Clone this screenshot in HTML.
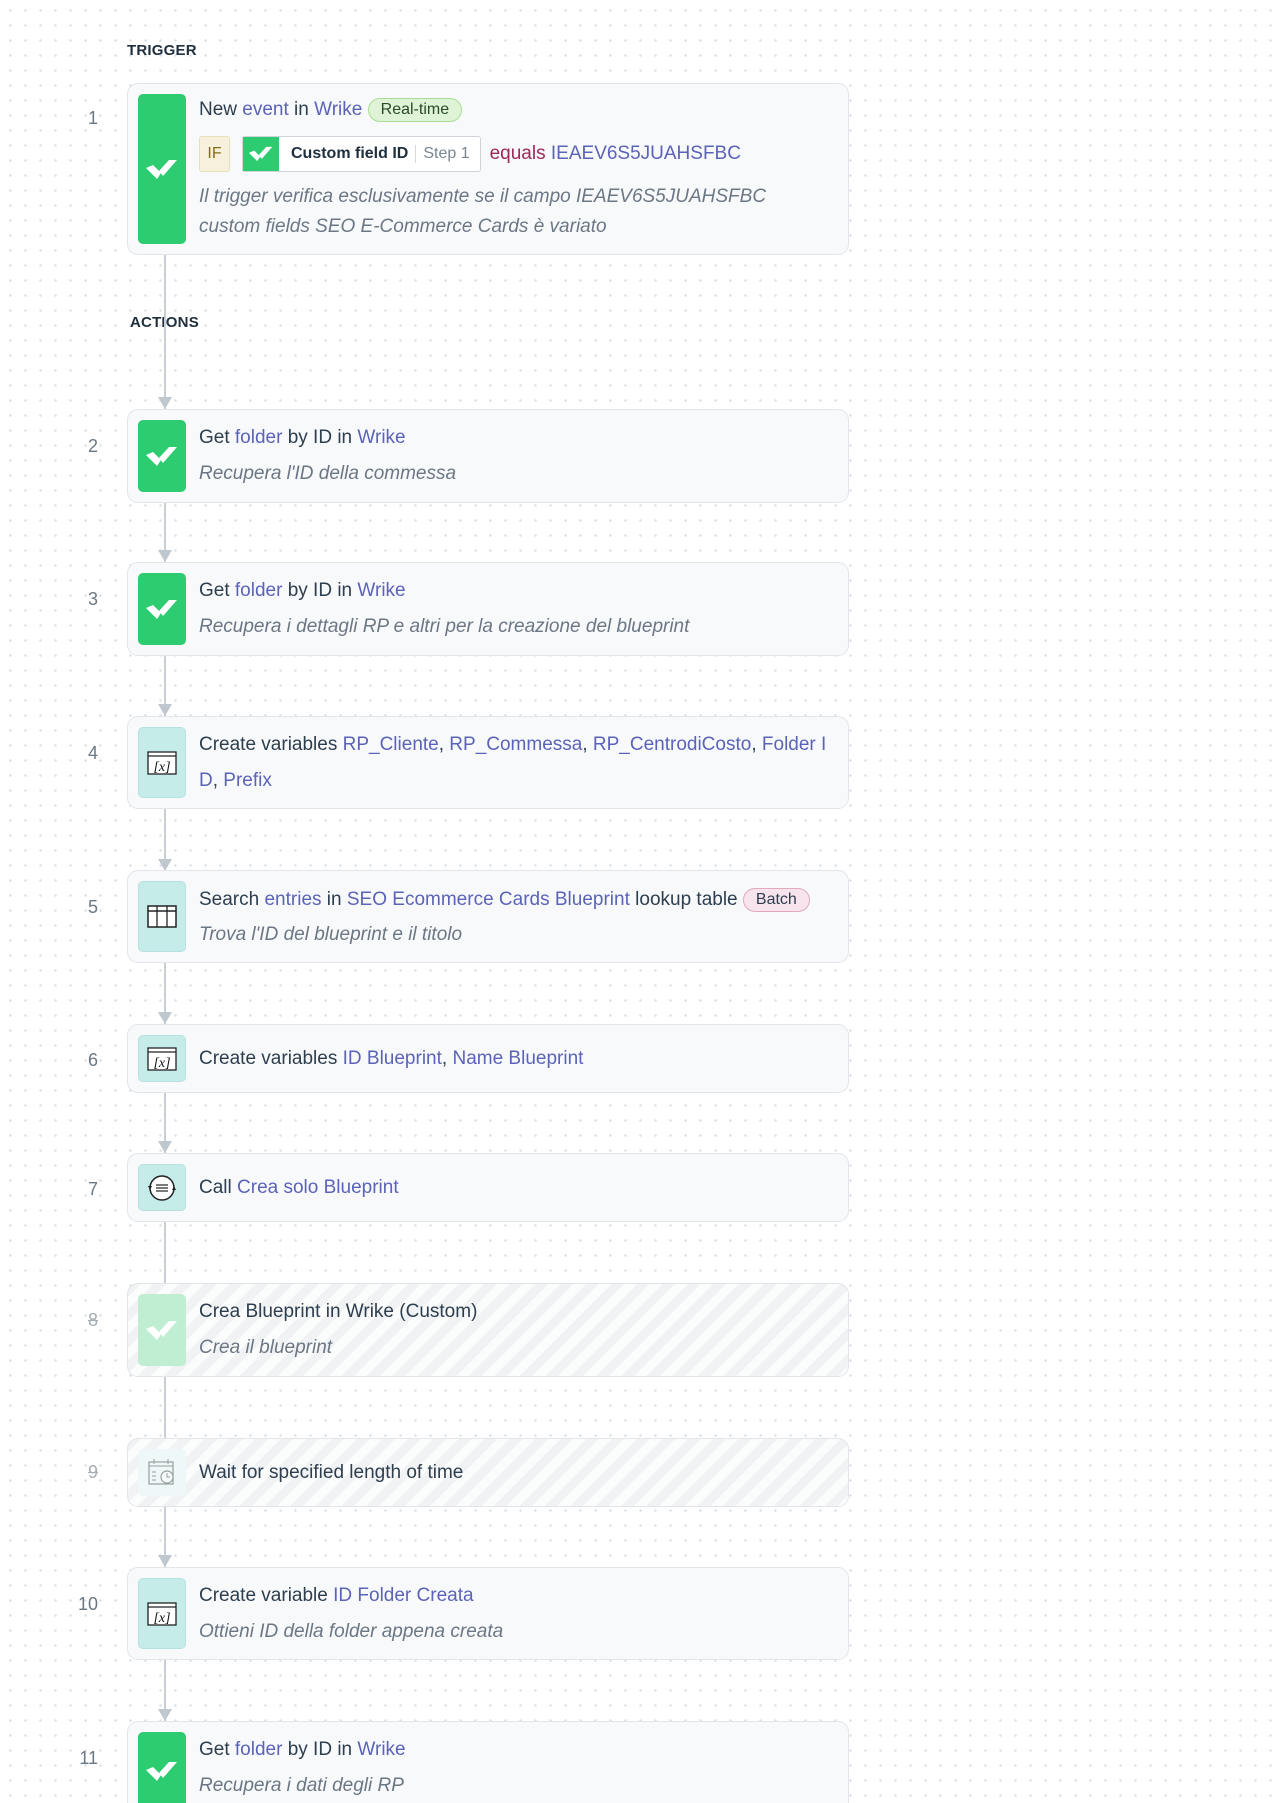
<!DOCTYPE html>
<html><head><meta charset="utf-8"><style>
*{box-sizing:border-box;margin:0;padding:0}
html,body{width:1273px;height:1803px;overflow:hidden}
body{background-color:#fff;background-image:radial-gradient(circle,#d9dee3 1.1px,transparent 1.4px);background-size:15px 15px;background-position:3px 3px;font-family:"Liberation Sans",sans-serif;color:#2d3e4e;position:relative}
.lbl{position:absolute;font-size:15px;font-weight:bold;color:#1f2f3d;letter-spacing:.2px}
.line{position:absolute;left:164px;width:2px;background:#c7ced6}
.arr{position:absolute;left:158px;width:0;height:0;border-left:7px solid transparent;border-right:7px solid transparent;border-top:12px solid #bfc7cf}
.card{position:absolute;left:127px;width:722px;background:#f8f9fb;border:1.5px solid #e2e6ea;border-radius:11px}
.dis{background:repeating-linear-gradient(135deg,#f0f2f4 0 9px,#fbfcfc 9px 18px)}
.ic{position:absolute;left:10px;top:10px;bottom:10px;width:48px;border-radius:5px;display:flex;align-items:center;justify-content:center}
.g{background:#2ecc71}.t{background:#c6ecea;border:1px solid #b7e1df}
.num{position:absolute;width:70px;text-align:right;left:28px;font-size:18px;color:#6b7884}
.tx{position:absolute;left:71px;font-size:19px;white-space:nowrap}
.l{color:#5b63b8}
.sub{font-style:italic;color:#6b7784}
.pill{display:inline-block;border-radius:14px;padding:2px 12px;font-size:16px;vertical-align:1px}
</style></head><body>
<svg width="0" height="0" style="position:absolute"><defs>
<g id="wr"><polygon points="0,9 7,6 15,14 11,20" fill="#fff"/><polygon points="13,12 23,1 31,1 17,17" fill="#fff"/></g>
<g id="vx"><rect x="1" y="1" width="28" height="22" fill="#fff" stroke="#222" stroke-width="1.3"/><line x1="1" y1="5" x2="29" y2="5" stroke="#222" stroke-width="1.3"/><text x="15" y="20" font-family="Liberation Serif" font-style="italic" font-size="14" text-anchor="middle" fill="#111">[x]</text></g>
</defs></svg>

<div class="lbl" style="left:127px;top:42px">TRIGGER</div>
<div class="lbl" style="left:130px;top:314px">ACTIONS</div>

<div class="line" style="top:255px;height:1540px"></div>
<div class="arr" style="top:397px"></div>
<div class="arr" style="top:550px"></div>
<div class="arr" style="top:704px"></div>
<div class="arr" style="top:859px"></div>
<div class="arr" style="top:1012px"></div>
<div class="arr" style="top:1141px"></div>
<div class="arr" style="top:1555px"></div>
<div class="arr" style="top:1709px"></div>

<div class="num" style="top:108px">1</div>
<div class="card" style="top:83px;height:172px">
 <div class="ic g"><svg width="32" height="21"><use href="#wr"/></svg></div>
 <div class="tx" style="top:14px">New <span class="l">event</span> in <span class="l">Wrike</span> <span class="pill" style="background:#dff3d6;border:1.5px solid #a8de94;color:#2b4a2a">Real-time</span></div>
 <div class="tx" style="top:52px;display:flex;align-items:center">
  <span style="display:inline-block;background:#f6f0dc;border:1px solid #e8dfb8;color:#8a6d1a;font-size:16px;border-radius:3px;width:31px;height:36px;line-height:34px;text-align:center">IF</span>
  <span style="display:inline-flex;align-items:center;margin-left:12px;border:1px solid #cfd4da;border-radius:3px;height:36px;background:#fff">
   <span style="background:#2ecc71;width:36px;height:34px;display:flex;align-items:center;justify-content:center"><svg width="24" height="16" viewBox="0 0 32 21"><use href="#wr"/></svg></span>
   <span style="font-weight:bold;font-size:16px;padding:0 7px 0 12px;color:#1f2f3d">Custom field ID</span><span style="border-left:1px solid #d5d9de;padding:0 10px 0 7px;color:#7a8590;font-size:16px">Step 1</span></span>
  <span style="margin-left:9px;color:#a0285a">equals</span>&nbsp;<span class="l">IEAEV6S5JUAHSFBC</span>
 </div>
 <div class="tx sub" style="top:98px;line-height:30px">Il trigger verifica esclusivamente se il campo IEAEV6S5JUAHSFBC<br>custom fields SEO E-Commerce Cards è variato</div>
</div>

<div class="num" style="top:436px">2</div>
<div class="card" style="top:409px;height:94px">
 <div class="ic g"><svg width="32" height="21"><use href="#wr"/></svg></div>
 <div class="tx" style="top:17px">Get <span class="l">folder</span> by ID in <span class="l">Wrike</span></div>
 <div class="tx sub" style="top:53px">Recupera l'ID della commessa</div>
</div>

<div class="num" style="top:589px">3</div>
<div class="card" style="top:562px;height:94px">
 <div class="ic g"><svg width="32" height="21"><use href="#wr"/></svg></div>
 <div class="tx" style="top:17px">Get <span class="l">folder</span> by ID in <span class="l">Wrike</span></div>
 <div class="tx sub" style="top:53px">Recupera i dettagli RP e altri per la creazione del blueprint</div>
</div>

<div class="num" style="top:743px">4</div>
<div class="card" style="top:716px;height:93px">
 <div class="ic t"><svg width="30" height="24"><use href="#vx"/></svg></div>
 <div class="tx" style="top:17px">Create variables <span class="l">RP_Cliente</span>, <span class="l">RP_Commessa</span>, <span class="l">RP_CentrodiCosto</span>, <span class="l">Folder I</span></div>
 <div class="tx" style="top:53px"><span class="l">D</span>, <span class="l">Prefix</span></div>
</div>

<div class="num" style="top:897px">5</div>
<div class="card" style="top:870px;height:93px">
 <div class="ic t"><svg width="30" height="24"><rect x="1" y="1" width="28" height="21" fill="#fff" stroke="#222" stroke-width="1.5"/><line x1="1" y1="6" x2="29" y2="6" stroke="#222" stroke-width="1.5"/><line x1="10" y1="1" x2="10" y2="22" stroke="#222" stroke-width="1.3"/><line x1="20" y1="1" x2="20" y2="22" stroke="#222" stroke-width="1.3"/></svg></div>
 <div class="tx" style="top:17px">Search <span class="l">entries</span> in <span class="l">SEO Ecommerce Cards Blueprint</span> lookup table <span class="pill" style="background:#f8e4ec;border:1.5px solid #e3a9be;color:#2d3e4e">Batch</span></div>
 <div class="tx sub" style="top:53px">Trova l'ID del blueprint e il titolo</div>
</div>

<div class="num" style="top:1050px">6</div>
<div class="card" style="top:1024px;height:69px">
 <div class="ic t"><svg width="30" height="24"><use href="#vx"/></svg></div>
 <div class="tx" style="top:23px">Create variables <span class="l">ID Blueprint</span>, <span class="l">Name Blueprint</span></div>
</div>

<div class="num" style="top:1179px">7</div>
<div class="card" style="top:1153px;height:69px">
 <div class="ic t"><svg width="32" height="32" viewBox="0 0 32 32"><circle cx="16" cy="16" r="12" fill="#fff" stroke="#222" stroke-width="1.5"/><line x1="10" y1="13" x2="22" y2="13" stroke="#222" stroke-width="1.2"/><line x1="10" y1="16" x2="22" y2="16" stroke="#222" stroke-width="1.2"/><line x1="10" y1="19" x2="22" y2="19" stroke="#222" stroke-width="1.2"/><polygon points="2,14 6,14 4,18" fill="#222"/><polygon points="26,18 30,18 28,14" fill="#222"/></svg></div>
 <div class="tx" style="top:23px">Call <span class="l">Crea solo Blueprint</span></div>
</div>

<div class="num" style="top:1310px;color:#a5adb5"><s>8</s></div>
<div class="card dis" style="top:1283px;height:94px">
 <div class="ic" style="background:#bfeed3"><svg width="32" height="21"><use href="#wr"/></svg></div>
 <div class="tx" style="top:17px">Crea Blueprint in Wrike (Custom)</div>
 <div class="tx sub" style="top:53px">Crea il blueprint</div>
</div>

<div class="num" style="top:1462px;color:#a5adb5"><s>9</s></div>
<div class="card dis" style="top:1438px;height:69px">
 <div class="ic" style="background:#eef8f8"><svg width="32" height="32" viewBox="0 0 32 32" opacity=".45"><rect x="3" y="5" width="24" height="22" fill="none" stroke="#333" stroke-width="1.2"/><line x1="3" y1="9" x2="27" y2="9" stroke="#333"/><line x1="8" y1="2" x2="8" y2="7" stroke="#333"/><line x1="22" y1="2" x2="22" y2="7" stroke="#333"/><circle cx="21" cy="20" r="6" fill="#fff" stroke="#333" stroke-width="1.2"/><path d="M21 16v4h3" fill="none" stroke="#333"/><path d="M6 15h4M6 19h4M6 23h4" stroke="#333"/></svg></div>
 <div class="tx" style="top:23px">Wait for specified length of time</div>
</div>

<div class="num" style="top:1594px">10</div>
<div class="card" style="top:1567px;height:93px">
 <div class="ic t"><svg width="30" height="24"><use href="#vx"/></svg></div>
 <div class="tx" style="top:17px">Create variable <span class="l">ID Folder Creata</span></div>
 <div class="tx sub" style="top:53px">Ottieni ID della folder appena creata</div>
</div>

<div class="num" style="top:1748px">11</div>
<div class="card" style="top:1721px;height:110px">
 <div class="ic g" style="bottom:auto;height:78px"><svg width="32" height="21"><use href="#wr"/></svg></div>
 <div class="tx" style="top:17px">Get <span class="l">folder</span> by ID in <span class="l">Wrike</span></div>
 <div class="tx sub" style="top:53px">Recupera i dati degli RP</div>
</div>
</body></html>
